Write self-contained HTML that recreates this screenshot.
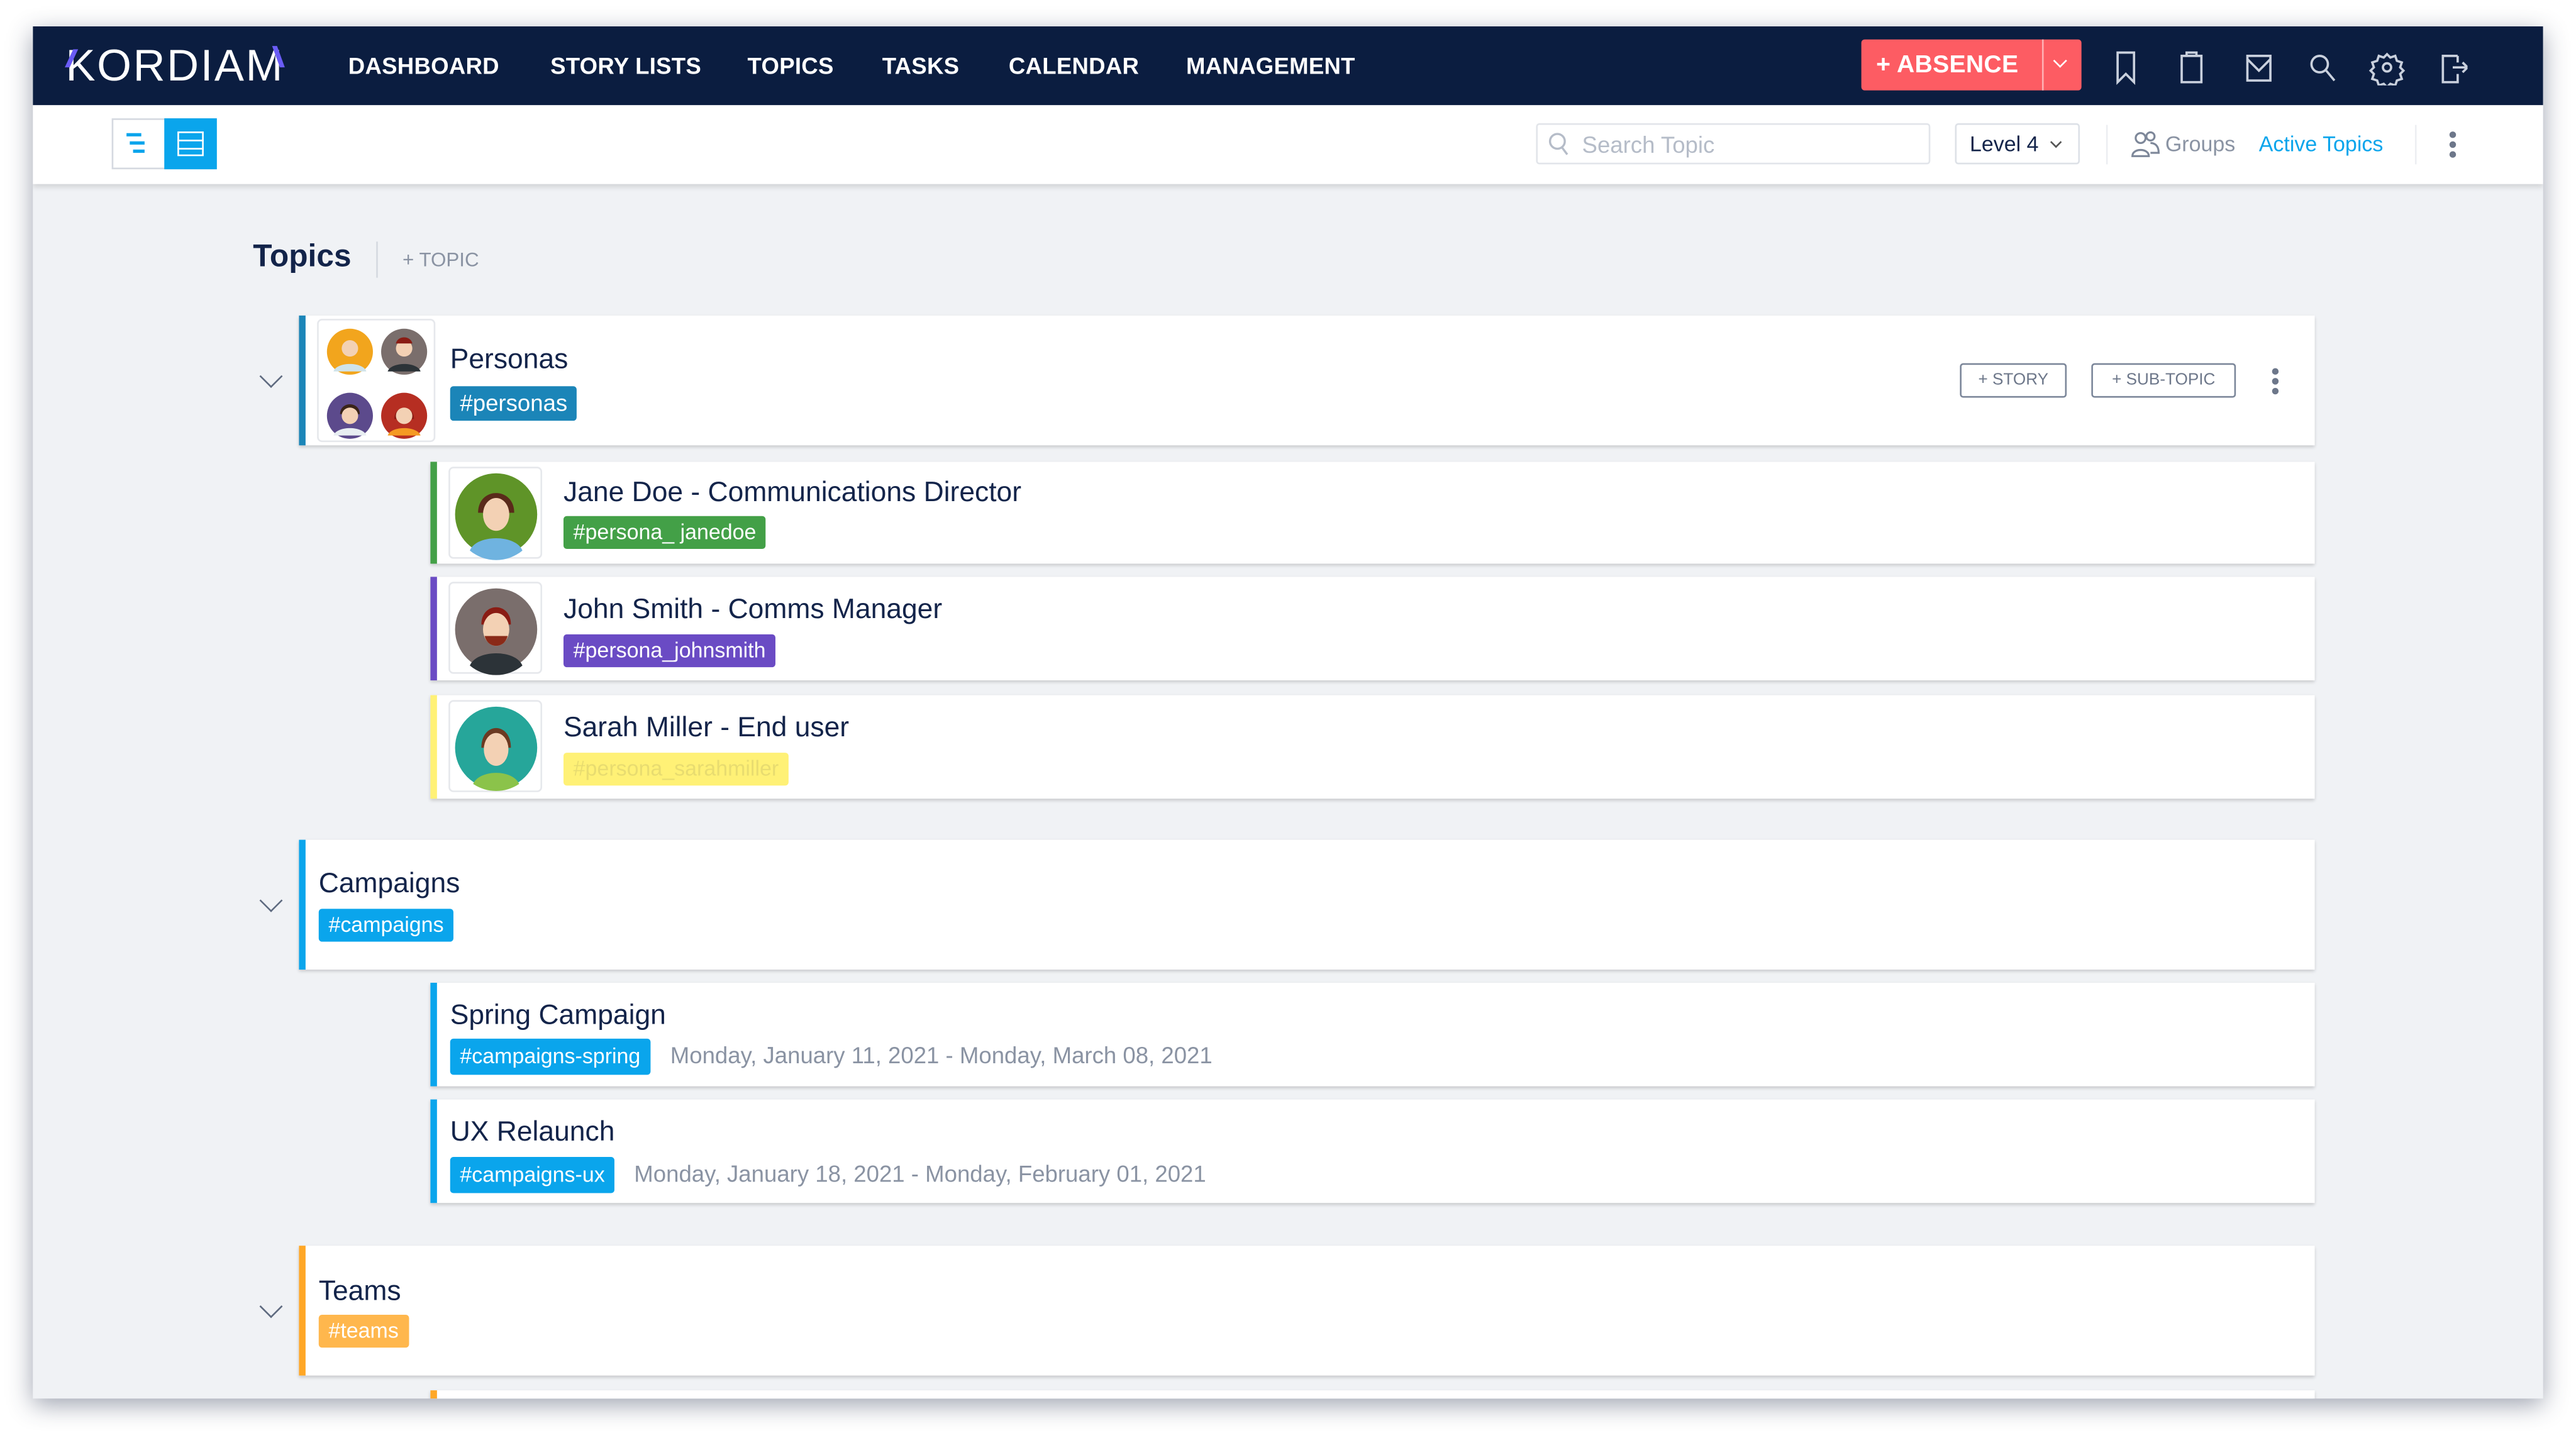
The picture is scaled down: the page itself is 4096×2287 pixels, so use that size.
<!DOCTYPE html>
<html><head><meta charset="utf-8"><style>
*{box-sizing:border-box;margin:0;padding:0}
html,body{width:4096px;height:2287px;overflow:hidden;background:#fff}
#w{position:absolute;left:0;top:0;width:1568px;height:875px;transform:scale(2.6122,2.6137);transform-origin:0 0;font-family:"Liberation Sans",sans-serif;}
.abs{position:absolute}
#app{position:absolute;left:20px;top:16px;width:1528px;height:835px;background:#f0f2f5;box-shadow:0 4px 14px rgba(40,50,80,.45);overflow:hidden}
#nav{position:absolute;left:0;top:0;width:1528px;height:48px;background:#0b1d40}
.ni{position:absolute;top:16px;color:#fff;font-weight:bold;font-size:14px;letter-spacing:.1px}
#tb{position:absolute;left:0;top:48px;width:1528px;height:48px;background:#fff;box-shadow:0 2px 3px rgba(0,0,0,.12)}
.card{position:absolute;background:#fff;box-shadow:0 1px 2px rgba(0,0,0,.18)}
.t{position:absolute;color:#13244a;font-size:17px}
.tag{position:absolute;color:#fff;font-size:13px;padding:0 6px;height:20px;line-height:20px;border-radius:2px}
.av{position:absolute;border:1px solid #e6e8ec;border-radius:3px;background:#fff}
.chev{position:absolute;left:140px;width:10px;height:10px;border-right:1.6px solid #5f6b80;border-bottom:1.6px solid #5f6b80;transform:rotate(45deg)}
.dt{position:absolute;color:#8a93a3;font-size:14px}
.btn{position:absolute;border:1px solid #7c879a;border-radius:2px;color:#6d778a;font-size:10px;text-align:center;line-height:19px;height:21px}
</style></head><body><div id="w">
<div id="app">
 <div id="nav">
  <div class="abs" style="left:20px;top:9px;color:#fff;font-size:27px;letter-spacing:1px;font-weight:normal">K<span>ORDIA</span>M</div>
  <div class="abs" style="left:22px;top:14px;width:3px;height:11px;background:#6a5cf6;transform:skewX(-25deg)"></div>
  <div class="abs" style="left:148px;top:12px;width:3px;height:13px;background:#6a5cf6;transform:skewX(20deg)"></div>
  <div class="ni" style="left:192px">DASHBOARD</div>
  <div class="ni" style="left:315px">STORY LISTS</div>
  <div class="ni" style="left:435px">TOPICS</div>
  <div class="ni" style="left:517px">TASKS</div>
  <div class="ni" style="left:594px">CALENDAR</div>
  <div class="ni" style="left:702px">MANAGEMENT</div>
  <div class="abs" style="left:1113px;top:8px;width:134px;height:31px;background:#fd5c63;border-radius:2px"></div>
  <div class="abs" style="left:1223px;top:8px;width:1px;height:31px;background:#ffb0b3"></div>
  <div class="ni" style="left:1122px;top:15px;font-size:15px">+ ABSENCE</div>
  <div class="abs" style="left:1231px;top:18px;width:6px;height:6px;border-right:1.5px solid #fff;border-bottom:1.5px solid #fff;transform:rotate(45deg)"></div>
  <svg class="abs" style="left:1262px;top:14px" width="220" height="22" fill="none" stroke="#c9d0dd" stroke-width="1.4">
   <path d="M7 2h10v18l-5-5-5 5z"/>
   <path d="M46 4h12v16h-12z M49 4v-2h6v2"/>
   <path d="M86 4h14v15h-14z M86 6l7 7 7-7"/>
   <circle cx="130" cy="9" r="5"/><path d="M134 13l5 6"/>
   <circle cx="171" cy="11" r="2.5"/><path d="M171 3l2 2 3-1 1 3 3 1-1 3 2 2-2 2 1 3-3 1-1 3-3-1-2 2-2-2-3 1-1-3-3-1 1-3-2-2 2-2-1-3 3-1 1-3 3 1z"/>
   <path d="M214 4h-9v16h9v-5 M214 8v-4 M211 11h8 M217 8l3 3-3 3"/>
  </svg>
 </div>
 <div id="tb">
  <div class="abs" style="left:48px;top:8px;width:64px;height:31px;border:1px solid #d5d9e0;background:#fff"></div>
  <div class="abs" style="left:80px;top:8px;width:32px;height:31px;background:#0aa5ec"></div>
  <div class="abs" style="left:57px;top:17px;width:9px;height:2px;background:#0aa5ec"></div>
  <div class="abs" style="left:59px;top:22px;width:9px;height:2px;background:#0aa5ec"></div>
  <div class="abs" style="left:61px;top:27px;width:7px;height:2px;background:#0aa5ec"></div>
  <div class="abs" style="left:88px;top:16px;width:16px;height:15px;border:1.4px solid #fff"></div>
  <div class="abs" style="left:88px;top:21px;width:16px;height:1.4px;background:#fff"></div>
  <div class="abs" style="left:88px;top:26px;width:16px;height:1.4px;background:#fff"></div>
  <div class="abs" style="left:915px;top:11px;width:240px;height:25px;border:1px solid #e2e5ea;border-radius:2px"></div>
  <svg class="abs" style="left:922px;top:16px" width="14" height="16" fill="none" stroke="#b5bcc8" stroke-width="1.3"><circle cx="6" cy="6" r="4.5"/><path d="M9 10l3 4"/></svg>
  <div class="abs" style="left:943px;top:16px;color:#b5bcc8;font-size:14px">Search Topic</div>
  <div class="abs" style="left:1170px;top:11px;width:76px;height:25px;border:1px solid #dde1e7;border-radius:2px"></div>
  <div class="abs" style="left:1179px;top:16px;color:#13244a;font-size:13px">Level 4</div>
  <div class="abs" style="left:1229px;top:20px;width:5px;height:5px;border-right:1.2px solid #555;border-bottom:1.2px solid #555;transform:rotate(45deg)"></div>
  <div class="abs" style="left:1262px;top:12px;width:1px;height:24px;background:#eceef2"></div>
  <svg class="abs" style="left:1277px;top:15px" width="18" height="18" fill="none" stroke="#7d8799" stroke-width="1.2"><circle cx="6" cy="5" r="3"/><path d="M1 16c0-5 10-5 10 0z"/><circle cx="12" cy="4" r="2.5"/><path d="M12 8c3 0 5 2 5 6h-5"/></svg>
  <div class="abs" style="left:1298px;top:16px;color:#8a93a3;font-size:13px">Groups</div>
  <div class="abs" style="left:1355px;top:16px;color:#0aa5ec;font-size:13px">Active Topics</div>
  <div class="abs" style="left:1450px;top:12px;width:1px;height:24px;background:#eceef2"></div>
  <div class="abs" style="left:1471px;top:16px;width:4px;height:4px;border-radius:50%;background:#6d778a;box-shadow:0 6px 0 #6d778a,0 12px 0 #6d778a"></div>
 </div>

 <div class="abs" style="left:134px;top:130px;color:#13244a;font-size:19px;font-weight:bold">Topics</div>
 <div class="abs" style="left:209px;top:131px;width:1px;height:22px;background:#d5d9e0"></div>
 <div class="abs" style="left:225px;top:135px;color:#8a93a3;font-size:12px">+ TOPIC</div>

 <!-- Personas -->
 <div class="chev" style="top:208px"></div>
 <div class="card" style="left:162px;top:176px;width:1227px;height:79px;border-left:4px solid #1b85b8">
  <div class="av" style="left:7px;top:2px;width:72px;height:75px">
   <svg width="72" height="75">
    <circle cx="19" cy="19" r="14" fill="#f2a51d"/><circle cx="19" cy="17" r="5" fill="#f3d1b4"/><path d="M9 31c2-6 18-6 20 0z" fill="#cfe3ea"/>
    <circle cx="52" cy="19" r="14" fill="#7a6e6c"/><circle cx="52" cy="17" r="5" fill="#f3d1b4"/><path d="M47 14c1-5 9-5 10 0z" fill="#8a1c14"/><path d="M42 31c2-6 18-6 20 0z" fill="#2c3338"/>
    <circle cx="19" cy="58" r="14" fill="#5c4a8c"/><path d="M13 57c0-8 12-8 12 0z" fill="#3a2418"/><circle cx="19" cy="58" r="5" fill="#f3d1b4"/><path d="M9 70c2-6 18-6 20 0z" fill="#e8eef2"/>
    <circle cx="52" cy="58" r="14" fill="#b62e22"/><path d="M46 60c0-9 12-9 12 0z" fill="#8a1c14"/><circle cx="52" cy="58" r="5" fill="#f3d1b4"/><path d="M42 70c2-6 18-6 20 0z" fill="#f59a23"/>
   </svg>
  </div>
  <div class="t" style="left:88px;top:17px">Personas</div>
  <div class="tag" style="left:88px;top:43px;background:#1b85b8;height:21px;line-height:21px;font-size:14px">#personas</div>
  <div class="btn" style="left:1007px;top:29px;width:65px">+ STORY</div>
  <div class="btn" style="left:1087px;top:29px;width:88px">+ SUB-TOPIC</div>
  <div class="abs" style="left:1197px;top:32px;width:4px;height:4px;border-radius:50%;background:#6d778a;box-shadow:0 6px 0 #6d778a,0 12px 0 #6d778a"></div>
 </div>

 <!-- persons -->
 <div class="card" style="left:242px;top:265px;width:1147px;height:62px;border-left:4px solid #43a047">
  <div class="av" style="left:7px;top:3px;width:57px;height:56px"><svg width="57" height="56"><circle cx="28" cy="28" r="25" fill="#5f9428"/><path d="M17 27c0-16 22-16 22 0z" fill="#5a2a1a"/><ellipse cx="28" cy="28" rx="8" ry="10" fill="#f3d1b4"/><path d="M12 50c4-10 28-10 32 0a25 25 0 0 1-32 0z" fill="#6fb3e0"/></svg></div>
  <div class="t" style="left:77px;top:9px">Jane Doe - Communications Director</div>
  <div class="tag" style="left:77px;top:33px;background:#43a047">#persona_ janedoe</div>
 </div>
 <div class="card" style="left:242px;top:335px;width:1147px;height:63px;border-left:4px solid #6a4bc4">
  <div class="av" style="left:7px;top:3px;width:57px;height:56px"><svg width="57" height="56"><circle cx="28" cy="28" r="25" fill="#7a6e6c"/><path d="M19 25c0-14 18-14 18 0z" fill="#8a1c14"/><ellipse cx="28" cy="28" rx="8" ry="10" fill="#f3d1b4"/><path d="M21 32c2 8 12 8 14 0z" fill="#8a2a18"/><path d="M12 50c4-10 28-10 32 0a25 25 0 0 1-32 0z" fill="#2c3338"/></svg></div>
  <div class="t" style="left:77px;top:10px">John Smith - Comms Manager</div>
  <div class="tag" style="left:77px;top:35px;background:#6a4bc4">#persona_johnsmith</div>
 </div>
 <div class="card" style="left:242px;top:407px;width:1147px;height:63px;border-left:4px solid #fff176">
  <div class="av" style="left:7px;top:3px;width:57px;height:56px"><svg width="57" height="56"><circle cx="28" cy="28" r="25" fill="#26a69a"/><path d="M19 28c0-16 18-16 18 0z" fill="#6b3a22"/><ellipse cx="28" cy="29" rx="7.5" ry="10" fill="#f3d1b4"/><path d="M14 50c4-9 24-9 28 0a25 25 0 0 1-28 0z" fill="#8bc34a"/></svg></div>
  <div class="t" style="left:77px;top:10px">Sarah Miller - End user</div>
  <div class="tag" style="left:77px;top:35px;background:#fff176;color:#e8dc70">#persona_sarahmiller</div>
 </div>

 <!-- Campaigns -->
 <div class="chev" style="top:527px"></div>
 <div class="card" style="left:162px;top:495px;width:1227px;height:79px;border-left:4px solid #0aa5ec">
  <div class="t" style="left:8px;top:17px">Campaigns</div>
  <div class="tag" style="left:8px;top:42px;background:#0aa5ec">#campaigns</div>
 </div>
 <div class="card" style="left:242px;top:582px;width:1147px;height:63px;border-left:4px solid #0aa5ec">
  <div class="t" style="left:8px;top:10px">Spring Campaign</div>
  <div class="tag" style="left:8px;top:34px;background:#0aa5ec;height:22px;line-height:22px">#campaigns-spring</div>
  <div class="dt" style="left:142px;top:36px">Monday, January 11, 2021 - Monday, March 08, 2021</div>
 </div>
 <div class="card" style="left:242px;top:653px;width:1147px;height:63px;border-left:4px solid #0aa5ec">
  <div class="t" style="left:8px;top:10px">UX Relaunch</div>
  <div class="tag" style="left:8px;top:35px;background:#0aa5ec;height:22px;line-height:22px">#campaigns-ux</div>
  <div class="dt" style="left:120px;top:37px">Monday, January 18, 2021 - Monday, February 01, 2021</div>
 </div>

 <!-- Teams -->
 <div class="chev" style="top:774px"></div>
 <div class="card" style="left:162px;top:742px;width:1227px;height:79px;border-left:4px solid #ffa726">
  <div class="t" style="left:8px;top:18px">Teams</div>
  <div class="tag" style="left:8px;top:42px;background:#ffb74d">#teams</div>
 </div>
 <div class="card" style="left:242px;top:830px;width:1147px;height:30px;border-left:4px solid #ffa726"></div>
</div>
</div></body></html>
